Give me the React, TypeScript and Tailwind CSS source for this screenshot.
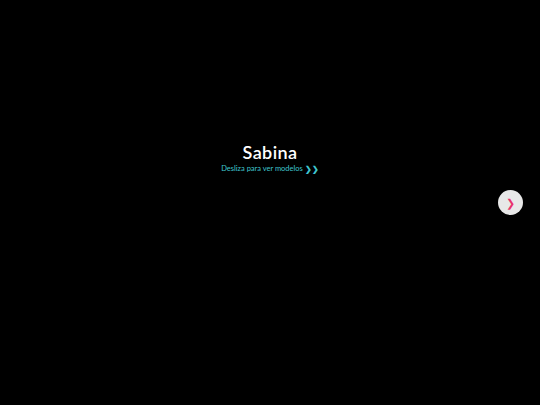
export default function App() {
  return (
    <div className="relative w-[540px] h-[405px] bg-black overflow-hidden" style={{ fontFamily: "Lato, 'Noto Sans', sans-serif" }}>
      <div className="flex flex-col items-center pt-[140px]">
        <h1 className="text-[18px] leading-[24px] font-semibold text-white tracking-[0.4px]">Sabina</h1>
        <p className="mt-0 text-[7.5px] leading-[10px] text-[#3fc6cf] flex items-center gap-[2px]">
          Desliza para ver modelos <span className="text-[8px] font-bold">❯❯</span>
        </p>
      </div>
      <button className="absolute left-[498px] top-[190px] w-[25px] h-[25px] rounded-full bg-[#e8e8e8] flex items-center justify-center text-[#e8336e] text-[11px] leading-none">
        ❯
      </button>
    </div>
  );
}
